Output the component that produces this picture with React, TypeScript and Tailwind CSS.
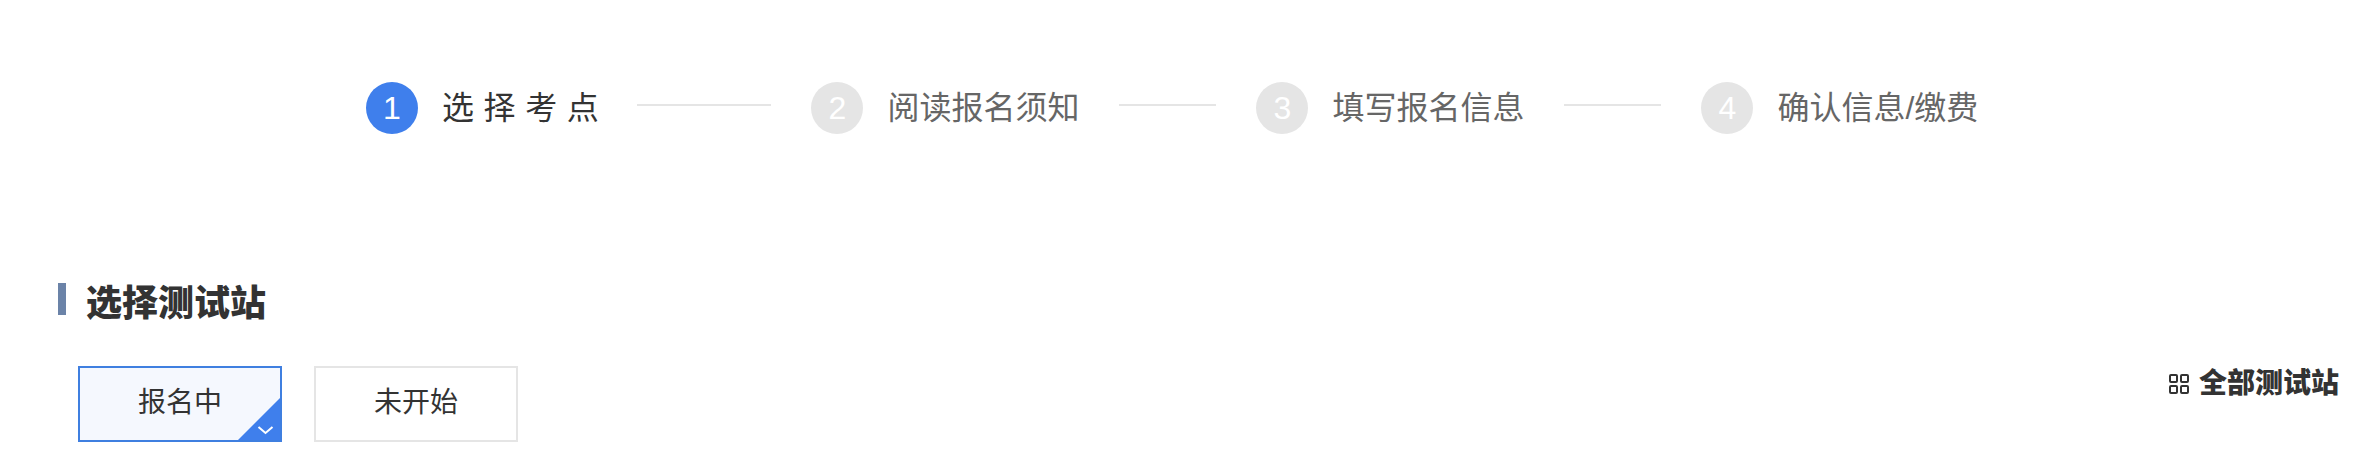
const fontCn = "font-['Liberation_Sans','Noto_Sans_CJK_SC',sans-serif]";

const steps = [
  { no: 1, label: '选择考点', active: true, line: 'ml-[29px] w-[134px]' },
  { no: 2, label: '阅读报名须知', active: false, line: 'ml-10 w-[97px]' },
  { no: 3, label: '填写报名信息', active: false, line: 'ml-10 w-[97px]' },
  { no: 4, label: '确认信息/缴费', active: false, line: '' },
];

function Steps() {
  return (
    <div className="flex items-center h-[52px] pl-[366px]">
      {steps.map((step) => (
        <div key={step.no} className="flex items-center">
          <span
            className={`flex items-center justify-center w-[52px] h-[52px] rounded-full text-[32px] text-white ${
              step.active ? 'bg-[#3f7fec]' : 'bg-[#e5e5e5]'
            }`}
          >
            {step.no}
          </span>
          <span
            className={
              step.active
                ? 'ml-6 -mt-[1px] text-[32px] leading-[52px] text-[#333] tracking-[9.6px]'
                : 'ml-6 -mt-[1px] text-[32px] leading-[52px] text-[#666]'
            }
          >
            {step.label}
          </span>
          {step.line && <span className={`mr-10 -mt-[6px] h-0.5 bg-[#e5e5e5] ${step.line}`} />}
        </div>
      ))}
    </div>
  );
}

export default function App() {
  return (
    <div className={`relative w-[2368px] h-[465px] bg-white overflow-hidden ${fontCn}`}>
      <div className="pt-[82px]">
        <Steps />
      </div>

      <div className="flex items-center mt-[149px] ml-[58px] h-8">
        <span className="w-2 h-8 bg-[#6b83a8]" />
        <h2 className="ml-5 mt-[10px] text-[36px] font-black leading-8 text-[#333]">选择测试站</h2>
      </div>

      <div className="flex items-start justify-between mt-[51px] pl-[78px] pr-[29px]">
        <div className="flex gap-8">
          <button className="relative w-[204px] h-[76px] pb-[3px] border-2 border-[#3f7fe0] bg-[#f5f8fe] text-[28px] text-[#333] overflow-hidden">
            报名中
            <svg className="absolute right-0 bottom-0" width="42" height="42" viewBox="0 0 42 42">
              <path d="M42 0V42H0Z" fill="#3f7fec" />
              <path d="M20.5 29L27.5 35L34.5 29" fill="none" stroke="#fff" strokeWidth="2" />
            </svg>
          </button>
          <button className="w-[204px] h-[76px] pb-[3px] border-2 border-[#e5e5e5] bg-white text-[28px] text-[#333]">
            未开始
          </button>
        </div>
        <div className="flex items-center -mt-[2px] h-10">
          <svg width="20" height="20" viewBox="0 0 20 20" fill="none" stroke="#333" strokeWidth="2">
            <rect x="1" y="1" width="7" height="7" rx="1" />
            <rect x="12" y="1" width="7" height="7" rx="1" />
            <rect x="1" y="12" width="7" height="7" rx="1" />
            <rect x="12" y="12" width="7" height="7" rx="1" />
          </svg>
          <span className="ml-[10px] text-[28px] font-black text-[#333]">全部测试站</span>
        </div>
      </div>
    </div>
  );
}
